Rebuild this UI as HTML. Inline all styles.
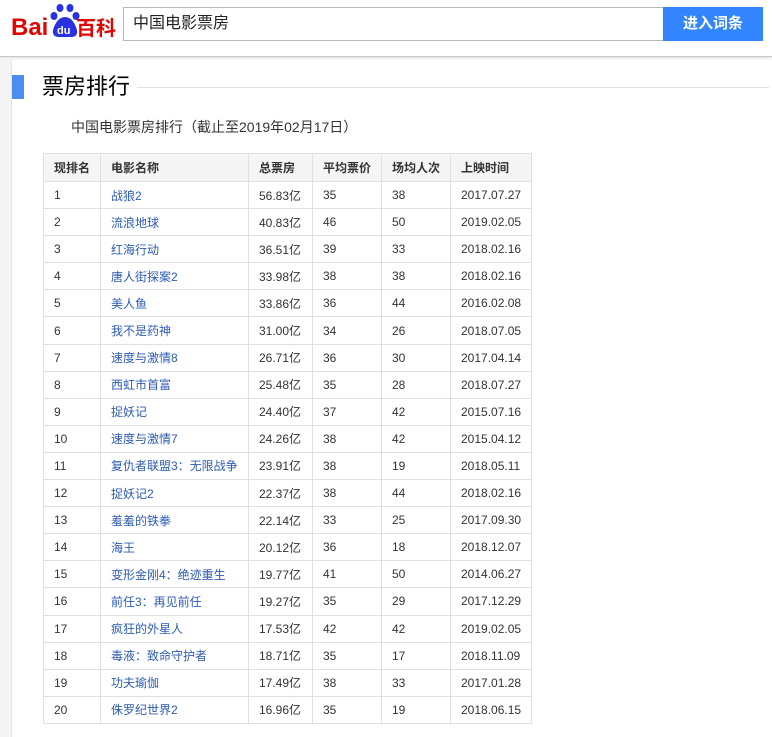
<!DOCTYPE html>
<html><head><meta charset="utf-8"><style>
*{margin:0;padding:0;box-sizing:border-box}
body{width:772px;height:737px;overflow:hidden;background:#fff;font-family:"Liberation Sans","Noto Sans CJK SC",sans-serif;position:relative;color:#333}
.hdr{position:absolute;left:0;top:0;width:772px;height:57px;background:#fff;border-bottom:1px solid #c8c8c8;box-shadow:0 1px 3px rgba(0,0,0,.15)}
.strip{position:absolute;left:0;top:58px;width:12px;height:679px;background:#f4f4f4;border-right:1px solid #e8e8e8}
.logo{position:absolute;left:10px;top:2px;width:106px;height:38px}
.sb{position:absolute;left:123px;top:7px;width:541px;height:34px;border:1px solid #b8b8b8;border-right:none;font-size:16px;line-height:32px;padding-left:9px;color:#222}
.btn{position:absolute;left:663px;top:7px;width:100px;height:34px;background:#3385ff;color:#fff;font-size:15px;font-weight:bold;text-align:center;line-height:34px}
.bar{position:absolute;left:12px;top:75px;width:12px;height:24px;background:#4c8ef0}
.ttl{position:absolute;left:42px;top:72px;font-size:22px;color:#000;line-height:30px}
.line{position:absolute;left:137px;top:87px;width:632px;height:1px;background:#e0e0e0}
.sub{position:absolute;left:71px;top:117px;font-size:14px;color:#333}
table{position:absolute;left:43px;top:153px;border-collapse:collapse;font-size:12px}
td,th{border:1px solid #e0e0e0;height:27.1px;padding:0 0 0 10px;text-align:left;font-weight:normal;color:#333}
th{background:#f5f5f5;height:28px;font-weight:bold;color:#333}
td.l{color:#2d5bb5}
</style></head><body>
<div class="hdr">
<svg class="logo" viewBox="0 0 106 38">
<text x="1" y="33" font-family="Liberation Sans" font-weight="bold" font-size="24" fill="#e10601">Bai</text>
<ellipse cx="50" cy="6" rx="3.5" ry="4" fill="#2932e1"/><ellipse cx="60" cy="6" rx="3.5" ry="4" fill="#2932e1"/>
<ellipse cx="44" cy="14" rx="3.5" ry="4" fill="#2932e1"/><ellipse cx="66" cy="14" rx="3.5" ry="4" fill="#2932e1"/>
<path d="M43 28 Q47 15 55 15 Q63 15 67 28 Q68 35 61 35 L49 35 Q42 35 43 28Z" fill="#2932e1"/>
<text x="47" y="32" font-family="Liberation Sans" font-weight="bold" font-size="11" fill="#fff">du</text>
<text x="66" y="33" font-family="Noto Sans CJK SC" font-weight="bold" font-size="20" fill="#e10601">百科</text>
</svg>
<div class="sb">中国电影票房</div>
<div class="btn">进入词条</div>
</div>
<div class="strip"></div>
<div class="bar"></div>
<div class="ttl">票房排行</div>
<div class="line"></div>
<div class="sub">中国电影票房排行（截止至2019年02月17日）</div>
<table>
<colgroup><col style="width:57px"><col style="width:148px"><col style="width:64px"><col style="width:69px"><col style="width:69px"><col style="width:81px"></colgroup>
<tr><th>现排名</th><th>电影名称</th><th>总票房</th><th>平均票价</th><th>场均人次</th><th>上映时间</th></tr>
<tr><td>1</td><td class="l">战狼2</td><td>56.83亿</td><td>35</td><td>38</td><td>2017.07.27</td></tr>
<tr><td>2</td><td class="l">流浪地球</td><td>40.83亿</td><td>46</td><td>50</td><td>2019.02.05</td></tr>
<tr><td>3</td><td class="l">红海行动</td><td>36.51亿</td><td>39</td><td>33</td><td>2018.02.16</td></tr>
<tr><td>4</td><td class="l">唐人街探案2</td><td>33.98亿</td><td>38</td><td>38</td><td>2018.02.16</td></tr>
<tr><td>5</td><td class="l">美人鱼</td><td>33.86亿</td><td>36</td><td>44</td><td>2016.02.08</td></tr>
<tr><td>6</td><td class="l">我不是药神</td><td>31.00亿</td><td>34</td><td>26</td><td>2018.07.05</td></tr>
<tr><td>7</td><td class="l">速度与激情8</td><td>26.71亿</td><td>36</td><td>30</td><td>2017.04.14</td></tr>
<tr><td>8</td><td class="l">西虹市首富</td><td>25.48亿</td><td>35</td><td>28</td><td>2018.07.27</td></tr>
<tr><td>9</td><td class="l">捉妖记</td><td>24.40亿</td><td>37</td><td>42</td><td>2015.07.16</td></tr>
<tr><td>10</td><td class="l">速度与激情7</td><td>24.26亿</td><td>38</td><td>42</td><td>2015.04.12</td></tr>
<tr><td>11</td><td class="l">复仇者联盟3：无限战争</td><td>23.91亿</td><td>38</td><td>19</td><td>2018.05.11</td></tr>
<tr><td>12</td><td class="l">捉妖记2</td><td>22.37亿</td><td>38</td><td>44</td><td>2018.02.16</td></tr>
<tr><td>13</td><td class="l">羞羞的铁拳</td><td>22.14亿</td><td>33</td><td>25</td><td>2017.09.30</td></tr>
<tr><td>14</td><td class="l">海王</td><td>20.12亿</td><td>36</td><td>18</td><td>2018.12.07</td></tr>
<tr><td>15</td><td class="l">变形金刚4：绝迹重生</td><td>19.77亿</td><td>41</td><td>50</td><td>2014.06.27</td></tr>
<tr><td>16</td><td class="l">前任3：再见前任</td><td>19.27亿</td><td>35</td><td>29</td><td>2017.12.29</td></tr>
<tr><td>17</td><td class="l">疯狂的外星人</td><td>17.53亿</td><td>42</td><td>42</td><td>2019.02.05</td></tr>
<tr><td>18</td><td class="l">毒液：致命守护者</td><td>18.71亿</td><td>35</td><td>17</td><td>2018.11.09</td></tr>
<tr><td>19</td><td class="l">功夫瑜伽</td><td>17.49亿</td><td>38</td><td>33</td><td>2017.01.28</td></tr>
<tr><td>20</td><td class="l">侏罗纪世界2</td><td>16.96亿</td><td>35</td><td>19</td><td>2018.06.15</td></tr>
</table>
</body></html>
